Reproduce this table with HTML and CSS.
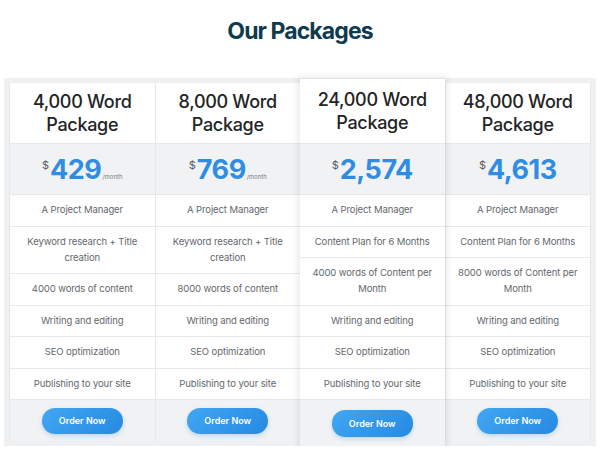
FILE: index.html
```html
<!DOCTYPE html>
<html lang="en">
<head>
    <meta charset="UTF-8">
    <meta name="viewport" content="width=device-width, initial-scale=1.0">
    <title>Our Packages</title>
    <link rel="stylesheet" href="styles.css">
</head>
<body>

    <h1>Our Packages</h1>

    <div class="pricing">
        <div class="plan">
            <div class="plan-head">4,000 Word Package</div>
            <div class="plan-price"><span class="cur">$</span><span class="amount">429</span><span class="per">/month</span></div>
            <div class="feature">A Project Manager</div>
            <div class="feature">Keyword research + Title creation</div>
            <div class="feature">4000 words of content</div>
            <div class="feature">Writing and editing</div>
            <div class="feature">SEO optimization</div>
            <div class="feature">Publishing to your site</div>
            <div class="plan-foot"><a class="btn" href="#">Order Now</a></div>
        </div>
        <div class="plan">
            <div class="plan-head">8,000 Word Package</div>
            <div class="plan-price"><span class="cur">$</span><span class="amount">769</span><span class="per">/month</span></div>
            <div class="feature">A Project Manager</div>
            <div class="feature">Keyword research + Title creation</div>
            <div class="feature">8000 words of content</div>
            <div class="feature">Writing and editing</div>
            <div class="feature">SEO optimization</div>
            <div class="feature">Publishing to your site</div>
            <div class="plan-foot"><a class="btn" href="#">Order Now</a></div>
        </div>
        <div class="plan featured">
            <div class="plan-head">24,000 Word Package</div>
            <div class="plan-price"><span class="cur">$</span><span class="amount">2,574</span></div>
            <div class="feature">A Project Manager</div>
            <div class="feature">Content Plan for 6 Months</div>
            <div class="feature">4000 words of Content per Month</div>
            <div class="feature">Writing and editing</div>
            <div class="feature">SEO optimization</div>
            <div class="feature">Publishing to your site</div>
            <div class="plan-foot"><a class="btn" href="#">Order Now</a></div>
        </div>
        <div class="plan">
            <div class="plan-head">48,000 Word Package</div>
            <div class="plan-price"><span class="cur">$</span><span class="amount">4,613</span></div>
            <div class="feature">A Project Manager</div>
            <div class="feature">Content Plan for 6 Months</div>
            <div class="feature">8000 words of Content per Month</div>
            <div class="feature">Writing and editing</div>
            <div class="feature">SEO optimization</div>
            <div class="feature">Publishing to your site</div>
            <div class="plan-foot"><a class="btn" href="#">Order Now</a></div>
        </div>
    </div>

</body>
</html>
```

FILE: styles.css
```css
body {
    font-family: Inter, "Noto Sans", sans-serif;
    background-color: #ffffff;
    margin: 0;
    padding: 0;
}
h1 {
    margin: 16px 0 0;
    font-size: 23px;
    line-height: 30px;
    font-weight: 700;
    letter-spacing: -0.9px;
    text-align: center;
    color: #0f3a4d;
}
.pricing {
    display: flex;
    margin: 32px 4px 0;
    padding: 5px;
    background-color: #eff0f2;
}
.plan {
    flex: 1;
    display: flex;
    flex-direction: column;
    background-color: #ffffff;
    border-left: 1px solid #e6e8ea;
}
.plan:last-child {
    border-right: 1px solid #e6e8ea;
}
.plan-head {
    padding: 7px 8px;
    font-size: 18px;
    line-height: 23px;
    font-weight: 500;
    letter-spacing: -0.3px;
    color: #222426;
    text-align: center;
    border-bottom: 1px solid #e6e8ea;
}
.plan-price {
    height: 50px;
    display: flex;
    align-items: center;
    justify-content: center;
    background-color: #f1f2f4;
    border-bottom: 1px solid #e6e8ea;
}
.cur {
    align-self: flex-start;
    margin-top: 14px;
    margin-right: 1px;
    font-size: 11px;
    color: #555a60;
}
.amount {
    font-size: 27px;
    font-weight: 700;
    letter-spacing: -0.5px;
    color: #2f8de4;
}
.per {
    align-self: flex-end;
    margin-bottom: 14px;
    margin-left: 1px;
    font-size: 6px;
    color: #777c82;
}
.feature {
    padding: 7.25px 9px;
    font-size: 9.5px;
    line-height: 16px;
    letter-spacing: -0.1px;
    color: #63676c;
    text-align: center;
    border-bottom: 1px solid #e8e9eb;
}
.plan-foot {
    flex: 1;
    display: flex;
    align-items: center;
    justify-content: center;
    padding: 7px 0;
    background-color: #f1f2f4;
}
.btn {
    display: inline-block;
    width: 81px;
    height: 26px;
    line-height: 26px;
    border-radius: 13px;
    background: linear-gradient(135deg, #41a6f2, #268ae2);
    box-shadow: 0 2px 4px rgba(38, 138, 226, 0.25);
    color: #ffffff;
    font-size: 9px;
    font-weight: 600;
    text-align: center;
    text-decoration: none;
}
.featured {
    position: relative;
    z-index: 1;
    margin: -4px 0 -5px;
    border-left: none;
    box-shadow: 0 0 6px 3px rgba(0, 0, 0, 0.07);
}
.featured .plan-head {
    padding: 9px 8px;
}
.featured .plan-foot {
    padding: 10px 0 9px;
}
.featured .btn {
    height: 27px;
    line-height: 27px;
}
```
